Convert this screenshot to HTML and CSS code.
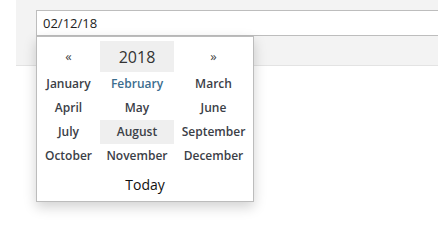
FILE: index.html
```html
<!DOCTYPE html>
<html>
<head>
<meta charset="utf-8">
<link rel="stylesheet" href="styles.css">
</head>
<body>
<div class="panel">
  <input class="date-input" type="text" value="02/12/18">
</div>
<div class="picker">
  <div class="grid">
    <div class="cell nav">«</div>
    <div class="cell year">2018</div>
    <div class="cell nav">»</div>
    <div class="cell month">January</div>
    <div class="cell month current">February</div>
    <div class="cell month">March</div>
    <div class="cell month">April</div>
    <div class="cell month">May</div>
    <div class="cell month">June</div>
    <div class="cell month">July</div>
    <div class="cell month hover">August</div>
    <div class="cell month">September</div>
    <div class="cell month">October</div>
    <div class="cell month">November</div>
    <div class="cell month">December</div>
  </div>
  <div class="today">Today</div>
</div>
</body>
</html>
```
FILE: styles.css
```css
html, body {
  margin: 0;
  padding: 0;
  overflow: hidden;
  background: #fff;
  font-family: "Open Sans", "DejaVu Sans", sans-serif;
}
.panel {
  margin-left: 16px;
  height: 55px;
  padding-top: 10px;
  padding-left: 20px;
  background: #f3f3f3;
  border-bottom: 1px solid #e3e3e3;
  box-sizing: content-box;
}
.date-input {
  display: block;
  box-sizing: border-box;
  width: calc(100% + 20px);
  height: 26px;
  margin: 0;
  padding: 0 6px;
  border: 1px solid #bdbdbd;
  background: #fff;
  font-family: "Open Sans", sans-serif;
  font-size: 13px;
  color: #222;
  outline: none;
}
.picker {
  position: absolute;
  top: 36px;
  left: 36px;
  width: 218px;
  height: 166px;
  box-sizing: border-box;
  background: #fff;
  border: 1px solid #bcbcbc;
  box-shadow: 0 5px 12px rgba(0, 0, 0, 0.18);
  padding-top: 4px;
}
.grid {
  display: grid;
  grid-template-columns: 63px 74px 79px;
  grid-template-rows: 31px repeat(4, 24px);
}
.cell {
  display: flex;
  align-items: center;
  justify-content: center;
  white-space: nowrap;
}
.nav {
  font-size: 13px;
  color: #444;
  padding-bottom: 2px;
}
.year {
  background: #efefef;
  font-size: 16px;
  color: #333;
}
.month {
  font-size: 12px;
  font-weight: 600;
  color: #3b4047;
  padding-bottom: 1px;
}
.month.current {
  color: #3c6d8e;
}
.month.hover {
  background: #efefef;
}
.today {
  height: 33px;
  display: flex;
  align-items: center;
  justify-content: center;
  font-size: 14px;
  color: #111;
}
```
